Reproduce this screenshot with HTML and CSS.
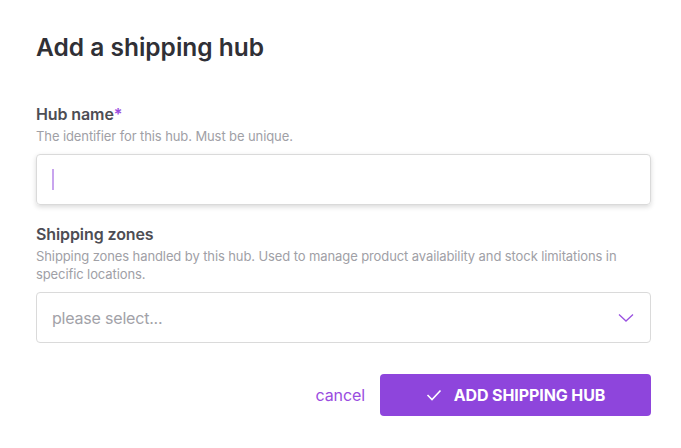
FILE: index.html
```html
<!DOCTYPE html>
<html>
<head>
<meta charset="utf-8">
<link rel="stylesheet" href="styles.css">
</head>
<body>
<div class="dialog">
  <h1 class="title">Add a shipping hub</h1>
  <div class="field field-first">
    <div class="label">Hub name<span class="req">*</span></div>
    <div class="desc">The identifier for this hub. Must be unique.</div>
    <div class="input focused"><span class="caret"></span></div>
  </div>
  <div class="field">
    <div class="label">Shipping zones</div>
    <div class="desc">Shipping zones handled by this hub. Used to manage product availability and stock limitations in specific locations.</div>
    <div class="input select">
      <span class="placeholder">please select...</span>
      <svg class="chevron" width="16" height="10" viewBox="0 0 16 10"><path d="M1 1.5 L8 8 L15 1.5" fill="none" stroke="#9a52e0" stroke-width="1.3"/></svg>
    </div>
  </div>
  <div class="actions">
    <a class="cancel">cancel</a>
    <button class="primary">
      <svg width="16" height="12" viewBox="0 0 16 12"><path d="M1.5 6 L6 10.5 L14.5 1.5" fill="none" stroke="#fff" stroke-width="1.6"/></svg>
      <span>ADD SHIPPING HUB</span>
    </button>
  </div>
</div>
</body>
</html>
```
FILE: styles.css
```css
html, body { margin: 0; padding: 0; background: #fff; }
body { font-family: Inter, "Noto Sans", sans-serif; color: #333; }
.dialog { padding: 32px 30px 0 36px; }
.title { margin: 0; font-size: 24.5px; font-weight: 600; color: #303036; line-height: 30px; letter-spacing: 0; }
.field-first { margin-top: 42px; }
.field { margin-bottom: 19px; }
.label { font-size: 16px; font-weight: 600; color: #4d4d54; line-height: 20px; letter-spacing: -0.1px; }
.req { color: #9a4ce0; }
.desc { font-size: 13px; color: #a0a0a6; line-height: 18px; margin-top: 3px; letter-spacing: -0.1px; }
.input { box-sizing: border-box; margin-top: 9px; height: 51px; border: 1px solid #dadada; border-radius: 4px; display: flex; align-items: center; padding: 0 15px; }
.focused { box-shadow: 0 2px 5px rgba(0,0,0,0.15); }
.caret { width: 2px; height: 21px; background: #c8a4ee; }
.select { justify-content: space-between; }
.placeholder { font-size: 16px; color: #a2a2a8; letter-spacing: -0.2px; }
.chevron { margin-right: 1px; }
.actions { display: flex; justify-content: flex-end; align-items: center; gap: 15px; margin-top: 31px; }
.cancel { color: #9a4ce0; font-size: 16px; letter-spacing: -0.1px; }
.primary { box-sizing: border-box; width: 271px; height: 42px; background: #8e45dc; border: 0; border-radius: 4px; color: #fff; font-family: Inter, sans-serif; font-weight: 700; font-size: 16px; letter-spacing: -0.1px; display: flex; align-items: center; justify-content: center; gap: 12px; padding: 0; }
```
